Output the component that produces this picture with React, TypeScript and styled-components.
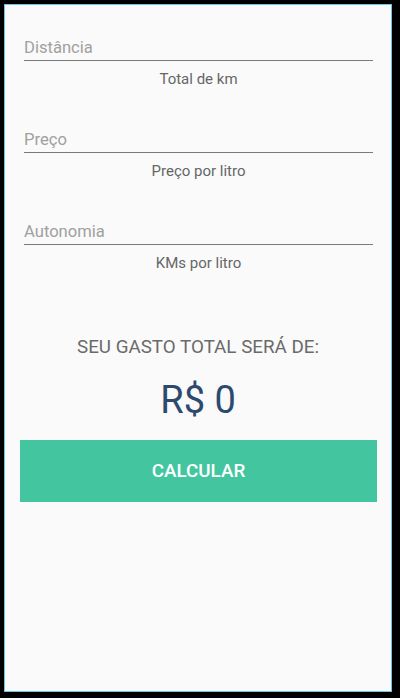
import React from "react";
import styled, { createGlobalStyle } from "styled-components";

const Global = createGlobalStyle`
  html, body { margin: 0; padding: 0; background: #000; }
  body { font-family: Roboto, "Noto Sans", sans-serif; }
  * { box-sizing: border-box; }
`;

const Page = styled.div`
  width: 400px;
  height: 698px;
  background: #000;
  padding: 4px 8px 6px 4px;
`;

const Screen = styled.div`
  width: 388px;
  height: 688px;
  border: 1px solid #6cc4ee;
  background: #fafafa;
  display: flex;
  flex-direction: column;
  padding-top: 29px;
`;

const Field = styled.div`
  display: flex;
  flex-direction: column;
  margin: 0 18px 37px 19px;
`;

const Input = styled.input`
  height: 27px;
  border: none;
  border-bottom: 1px solid #7a7a7a;
  background: transparent;
  padding: 0;
  font-family: Roboto, sans-serif;
  font-size: 16.6px;
  color: #333;
  outline: none;
  &::placeholder { color: #a0a0a0; }
`;

const Helper = styled.div`
  margin-top: 8px;
  line-height: 20px;
  font-size: 15px;
  color: #666;
  text-align: center;
`;

const ResultLabel = styled.div`
  margin-top: 25px;
  line-height: 24px;
  font-size: 18.8px;
  color: #6a6a6a;
  text-align: center;
`;

const Amount = styled.div`
  margin-top: 19px;
  line-height: 44px;
  font-size: 38px;
  color: #2d4a6e;
  text-align: center;
`;

const Button = styled.button`
  margin: 18px 14px 0 15px;
  height: 62px;
  border: none;
  background: #43c69f;
  color: #fff;
  font-family: Roboto, sans-serif;
  font-weight: 500;
  font-size: 18.8px;
  cursor: pointer;
`;

const fields = [
  { placeholder: "Distância", helper: "Total de km" },
  { placeholder: "Preço", helper: "Preço por litro" },
  { placeholder: "Autonomia", helper: "KMs por litro" },
];

export default function App() {
  return (
    <>
      <Global />
      <Page>
        <Screen>
          {fields.map((f) => (
            <Field key={f.placeholder}>
              <Input placeholder={f.placeholder} />
              <Helper>{f.helper}</Helper>
            </Field>
          ))}
          <ResultLabel>SEU GASTO TOTAL SERÁ DE:</ResultLabel>
          <Amount>R$ 0</Amount>
          <Button>CALCULAR</Button>
        </Screen>
      </Page>
    </>
  );
}
